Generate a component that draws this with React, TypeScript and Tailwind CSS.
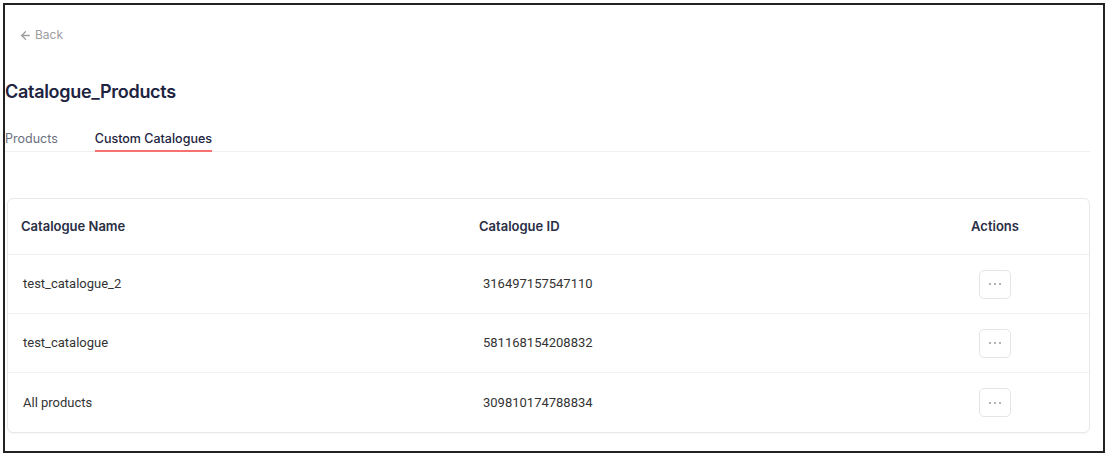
import React from 'react'
import { ArrowLeft } from 'lucide-react'

const rows = [
  { name: 'test_catalogue_2', id: '316497157547110' },
  { name: 'test_catalogue', id: '581168154208832' },
  { name: 'All products', id: '309810174788834' },
]

export default function App() {
  return (
    <div className="w-[1108px] h-[456px] bg-white p-[3px]">
      <div className="h-full border-2 border-[#222] bg-white flex flex-col font-['Inter',sans-serif]">
        <div className="mt-[22px] ml-[14px] h-4 flex items-center gap-[3px] text-[12px] text-[#9d9d9f]">
          <ArrowLeft size={13} strokeWidth={2.4} />
          <span>Back</span>
        </div>

        <h1 className="mt-[37px] h-6 leading-6 text-[18px] font-semibold text-[#1d2340] tracking-[-0.3px]">
          Catalogue_Products
        </h1>

        <div className="mt-[27px] mr-[13px] flex items-end gap-[37px] border-b border-[#efefef] text-[12.5px] leading-4">
          <div className="pb-[3px] -mb-px border-b-2 border-transparent text-[#6b6f80]">Products</div>
          <div className="pb-[3px] -mb-px border-b-2 border-[#f87171] text-[#1d2340] font-medium">
            Custom Catalogues
          </div>
        </div>

        <div className="mt-[46px] ml-[2px] mr-[13px] rounded-md border border-[#e8e8e8] shadow-[0_1px_2px_rgba(0,0,0,0.04)]">
          <div className="grid grid-cols-[458px_1fr_188px] h-[56px] items-center border-b border-[#efefef] text-[13px] font-semibold text-[#2a2e45]">
            <div className="pl-[13px]">Catalogue Name</div>
            <div className="pl-[13px]">Catalogue ID</div>
            <div className="text-center">Actions</div>
          </div>
          {rows.map((r, i) => (
            <div
              key={r.id}
              className={`grid grid-cols-[458px_1fr_188px] h-[59px] items-center text-[13px] text-[#333] font-['Roboto',sans-serif] ${
                i < rows.length - 1 ? 'border-b border-[#f2f2f2]' : ''
              }`}
            >
              <div className="pl-[15px]">{r.name}</div>
              <div className="pl-[17px]">{r.id}</div>
              <div className="flex justify-center">
                <button className="w-8 h-[29px] rounded-[5px] border border-[#e5e5e5] bg-white flex items-center justify-center gap-[3px]">
                  <span className="w-[2px] h-[2px] rounded-full bg-[#9a9a9a]" />
                  <span className="w-[2px] h-[2px] rounded-full bg-[#9a9a9a]" />
                  <span className="w-[2px] h-[2px] rounded-full bg-[#9a9a9a]" />
                </button>
              </div>
            </div>
          ))}
        </div>
      </div>
    </div>
  )
}
